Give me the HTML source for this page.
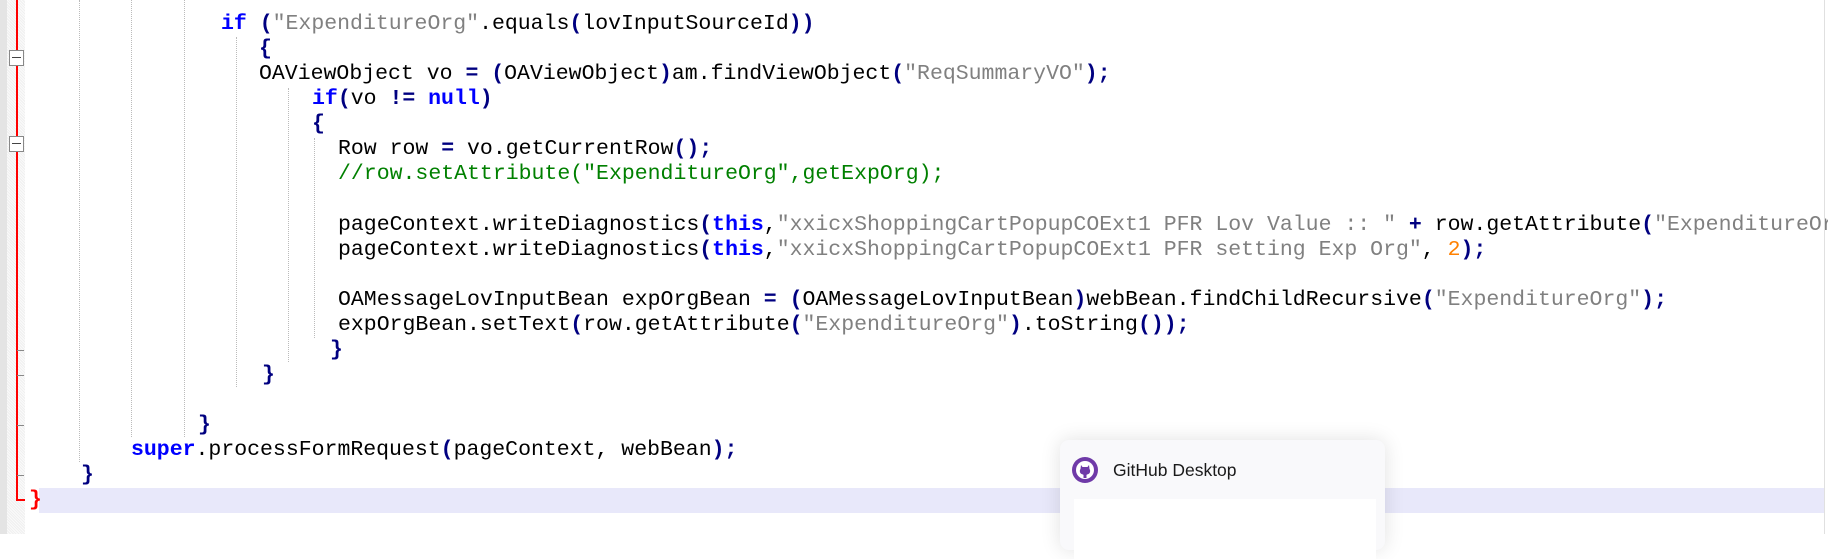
<!DOCTYPE html>
<html><head><meta charset="utf-8"><style>
body{margin:0;width:1828px;height:534px;overflow:hidden;background:#fff;position:relative;font-family:"Liberation Mono",monospace;}
.g1{position:absolute;left:0;top:0;width:7px;height:534px;background:#e4e4e4}
.g2{position:absolute;left:7px;top:0;width:18px;height:534px;background:repeating-linear-gradient(45deg,#f0f0f0 0 1px,#fafafa 1px 2px)}
.red{position:absolute;left:16px;top:0;width:2px;height:500px;background:#f00}
.tick{position:absolute;left:17px;width:7px;height:1px;background:#888}
.box{position:absolute;left:9px;width:13px;height:14px;border:1px solid #888;background:#fff}
.box:after{content:"";position:absolute;left:2px;right:2px;top:6px;height:1px;background:#444}
.hl{position:absolute;left:39px;top:488px;width:1786px;height:25px;background:#e8e8fa}
.vg{position:absolute;width:0;border-left:1px dotted #bbb}
.l{position:absolute;white-space:pre;font-size:21.5px;line-height:25px;color:#000}
.k{color:#0000ff;font-weight:bold}.s{color:#808080}.c{color:#008000}.o{color:#000080;font-weight:bold}.n{color:#ff8000}
.card{position:absolute;left:1060px;top:440px;width:325px;height:110px;background:#f9f9fb;border-radius:9px;box-shadow:0 0 20px rgba(0,0,0,.12);font-family:"Liberation Sans",sans-serif}
</style></head><body>
<div class="g1"></div><div class="g2"></div>
<div class="hl"></div>
<div class="red"></div>
<div style="position:absolute;left:16px;top:499px;width:9px;height:2px;background:#f00"></div>
<div class="tick" style="top:350px"></div><div class="tick" style="top:375px"></div><div class="tick" style="top:425px"></div><div class="tick" style="top:475px"></div>
<div class="box" style="top:50px"></div><div class="box" style="top:136px"></div>
<div class="vg" style="left:79px;top:0;height:462px"></div>
<div class="vg" style="left:131px;top:0;height:437px"></div>
<div class="vg" style="left:184px;top:0;height:437px"></div>
<div class="vg" style="left:236px;top:37px;height:350px"></div>
<div class="vg" style="left:288px;top:88px;height:274px"></div>
<div class="vg" style="left:314px;top:138px;height:200px"></div>
<div class="l" style="left:221px;top:12px"><span class="k">if</span> <span class="o">(</span><span class="s">"ExpenditureOrg"</span>.equals<span class="o">(</span>lovInputSourceId<span class="o">))</span></div>
<div class="l" style="left:259px;top:37px"><span class="o">{</span></div>
<div class="l" style="left:259px;top:62px">OAViewObject vo <span class="o">=</span> <span class="o">(</span>OAViewObject<span class="o">)</span>am.findViewObject<span class="o">(</span><span class="s">"ReqSummaryVO"</span><span class="o">);</span></div>
<div class="l" style="left:312px;top:87px"><span class="k">if</span><span class="o">(</span>vo <span class="o">!=</span> <span class="k">null</span><span class="o">)</span></div>
<div class="l" style="left:312px;top:112px"><span class="o">{</span></div>
<div class="l" style="left:338px;top:137px">Row row <span class="o">=</span> vo.getCurrentRow<span class="o">();</span></div>
<div class="l" style="left:338px;top:162px"><span class="c">//row.setAttribute("ExpenditureOrg",getExpOrg);</span></div>
<div class="l" style="left:338px;top:213px">pageContext.writeDiagnostics<span class="o">(</span><span class="k">this</span>,<span class="s">"xxicxShoppingCartPopupCOExt1 PFR Lov Value :: "</span> <span class="o">+</span> row.getAttribute<span class="o">(</span><span class="s">"ExpenditureOrg"</span><span class="o">))</span></div>
<div class="l" style="left:338px;top:238px">pageContext.writeDiagnostics<span class="o">(</span><span class="k">this</span>,<span class="s">"xxicxShoppingCartPopupCOExt1 PFR setting Exp Org"</span>, <span class="n">2</span><span class="o">);</span></div>
<div class="l" style="left:338px;top:288px">OAMessageLovInputBean expOrgBean <span class="o">=</span> <span class="o">(</span>OAMessageLovInputBean<span class="o">)</span>webBean.findChildRecursive<span class="o">(</span><span class="s">"ExpenditureOrg"</span><span class="o">);</span></div>
<div class="l" style="left:338px;top:313px">expOrgBean.setText<span class="o">(</span>row.getAttribute<span class="o">(</span><span class="s">"ExpenditureOrg"</span><span class="o">)</span>.toString<span class="o">());</span></div>
<div class="l" style="left:330px;top:338px"><span class="o">}</span></div>
<div class="l" style="left:262px;top:363px"><span class="o">}</span></div>
<div class="l" style="left:198px;top:413px"><span class="o">}</span></div>
<div class="l" style="left:131px;top:438px"><span class="k">super</span>.processFormRequest<span class="o">(</span>pageContext, webBean<span class="o">);</span></div>
<div class="l" style="left:81px;top:463px"><span class="o">}</span></div>
<div class="l" style="left:29px;top:488px;color:#f00;font-weight:bold">}</div>
<div style="position:absolute;left:1824px;top:0;width:1px;height:534px;background:#e0e0e0"></div>
<div class="card">
<svg style="position:absolute;left:12px;top:17px" width="26" height="26" viewBox="0 0 26 26"><circle cx="13" cy="13" r="13" fill="#6f3aa8"/><circle cx="13" cy="13" r="9" fill="#fff"/><path d="M9 8l1.5 2h5L17 8l.5 4c1 1 1 4-1 5-1 .5-2 .5-2 1v3h-3v-3c0-.5-1-.5-2-1-2-1-2-4-1-5z" fill="#6f3aa8"/></svg>
<div style="position:absolute;left:53px;top:20px;font-size:17.5px;color:#1a1a1a">GitHub Desktop</div>
<div style="position:absolute;left:14px;top:59px;width:302px;height:60px;background:#fff"></div>
</div>
</body></html>
